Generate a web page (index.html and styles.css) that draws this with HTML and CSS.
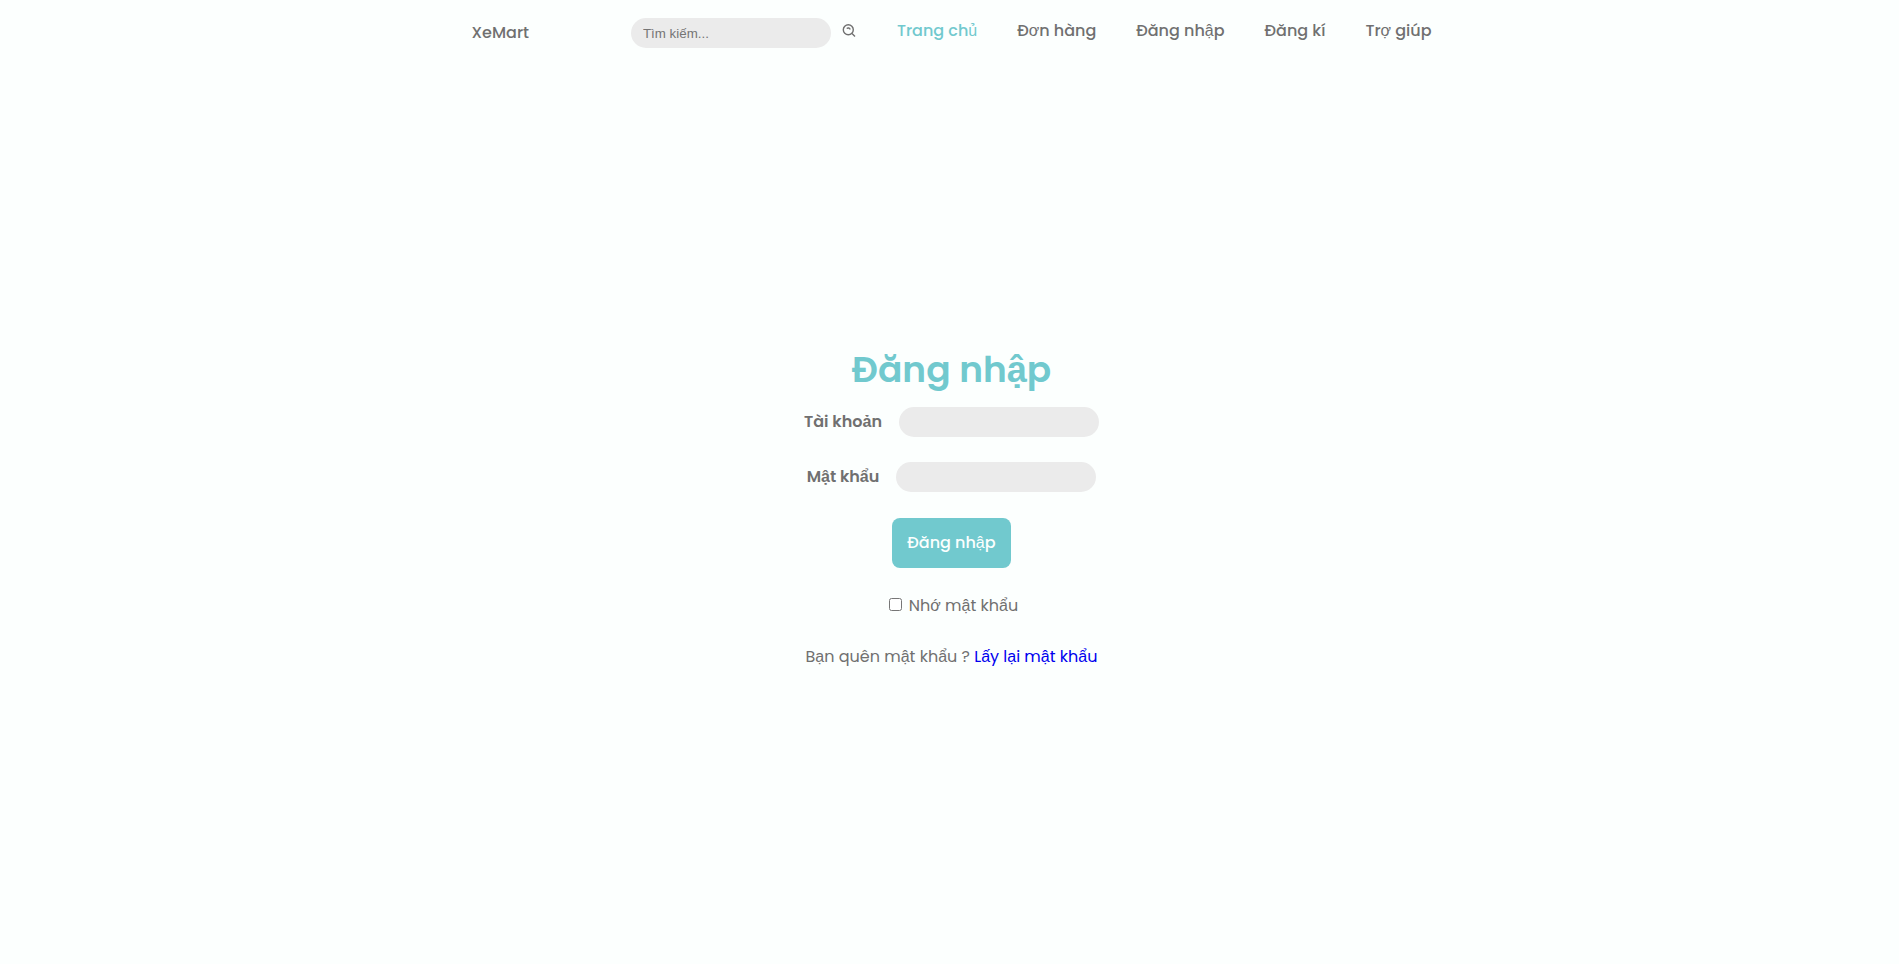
FILE: index.html
```html
<!DOCTYPE html>
<html lang="vi">
<head>
<meta charset="utf-8">
<meta name="viewport" content="width=device-width, initial-scale=1">
<title>XeMart - Đăng nhập</title>
<link rel="stylesheet" href="styles.css">
</head>
<body>
<header class="header">
  <nav class="nav">
    <a class="nav-logo" href="#">XeMart</a>
    <form class="search">
      <input class="field search-field" type="text" placeholder="Tìm kiếm..." aria-label="Tìm kiếm">
      <button class="search-button" type="button" aria-label="Tìm">
        <svg class="search-icon" viewBox="0 0 16 16" fill="none" stroke="currentColor" stroke-width="1.4" aria-hidden="true">
          <circle cx="7.300" cy="6.700" r="5"/>
          <path d="M11 10.500l3 3M5.700 5.500c1.300-1 3-.5 3.500.900"/>
        </svg>
      </button>
    </form>
    <ul class="nav-list">
      <li><a class="nav-link nav-link-active" href="#">Trang chủ</a></li>
      <li><a class="nav-link" href="#">Đơn hàng</a></li>
      <li><a class="nav-link" href="#">Đăng nhập</a></li>
      <li><a class="nav-link" href="#">Đăng kí</a></li>
      <li><a class="nav-link" href="#">Trợ giúp</a></li>
    </ul>
  </nav>
</header>
<main class="main">
  <form class="login">
    <h1 class="title">Đăng nhập</h1>
    <div class="row">
      <label class="label" for="user">Tài khoản</label>
      <input class="field" id="user" type="text">
    </div>
    <div class="row">
      <label class="label" for="pass">Mật khẩu</label>
      <input class="field" id="pass" type="password">
    </div>
    <button class="submit" type="button">Đăng nhập</button>
    <div class="remember">
      <input class="check" id="remember" type="checkbox">
      <label for="remember">Nhớ mật khẩu</label>
    </div>
    <p class="forgot">Bạn quên mật khẩu ? <a class="forgot-link" href="#">Lấy lại mật khẩu</a></p>
  </form>
</main>
</body>
</html>
```
FILE: styles.css
```css
* { box-sizing: border-box; margin: 0; padding: 0; }
body {
  display: flex;
  flex-direction: column;
  min-height: 100vh;
  background: #fcfffe;
  color: #707070;
  font-family: Poppins, "Liberation Sans", Arial, sans-serif;
  font-size: 16px;
  line-height: 24px;
}
a { text-decoration: none; }
.header { padding: 18px 0; }
.nav {
  display: flex;
  justify-content: space-between;
  max-width: 964px;
  margin: 0 auto;
  padding-left: 4px;
}
.nav-logo, .nav-link { color: #707070; font-weight: 500; }
.nav-logo { padding-top: 3px; }
.search { display: flex; align-items: flex-start; margin-left: 62px; }
.field {
  width: 200px;
  height: 30px;
  padding: 0 12px;
  border: none;
  border-radius: 15px;
  outline: none;
  background: #ebebeb;
  color: #707070;
  font-family: "Liberation Sans", Arial, sans-serif;
}
.field::placeholder { color: #757575; }
.search-button {
  display: flex;
  margin: 5px 0 0 10px;
  border: none;
  background: none;
  color: #707070;
}
.search-icon { width: 16px; height: 16px; }
.nav-list { display: flex; gap: 40px; padding-top: 1px; list-style: none; }
.nav-link-active { color: #71c9ce; }
.main {
  display: flex;
  flex: 1;
  align-items: center;
  justify-content: center;
  padding: 0 0 22px 4px;
}
.login { display: flex; flex-direction: column; align-items: center; }
.title {
  margin-bottom: 7px;
  color: #71c9ce;
  font-size: 36px;
  font-weight: 600;
  line-height: 60px;
}
.row { display: flex; align-items: center; gap: 17px; margin-bottom: 25px; }
.label { font-weight: 600; }
.submit {
  height: 50px;
  margin-top: 1px;
  padding: 0 15px;
  border: none;
  border-radius: 8px;
  background: #71c9ce;
  color: #fcfffe;
  font: inherit;
  font-weight: 500;
}
.remember { display: flex; align-items: center; gap: 7px; margin: 26px 0 27px 4px; }
.check { width: 13px; height: 13px; margin-bottom: 2px; }
.forgot-link { color: #0000ee; }
```
